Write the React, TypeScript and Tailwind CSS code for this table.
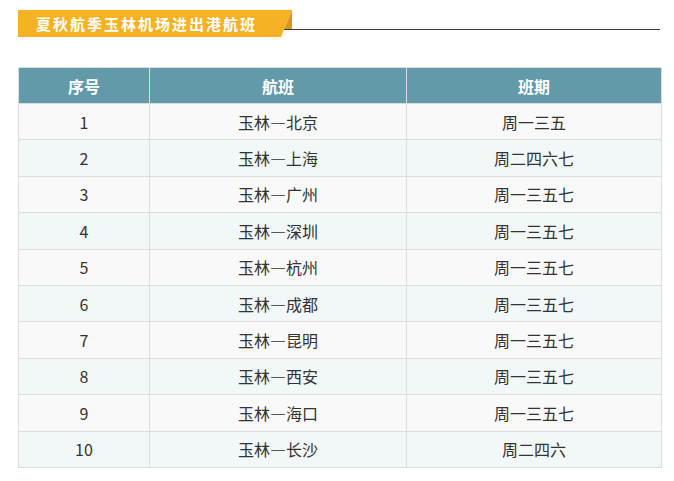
import React from "react";

const rows: [string, string, string, string][] = [
  ["1", "玉林", "北京", "周一三五"],
  ["2", "玉林", "上海", "周二四六七"],
  ["3", "玉林", "广州", "周一三五七"],
  ["4", "玉林", "深圳", "周一三五七"],
  ["5", "玉林", "杭州", "周一三五七"],
  ["6", "玉林", "成都", "周一三五七"],
  ["7", "玉林", "昆明", "周一三五七"],
  ["8", "玉林", "西安", "周一三五七"],
  ["9", "玉林", "海口", "周一三五七"],
  ["10", "玉林", "长沙", "周二四六"],
];

export default function App() {
  return (
    <div
      className="w-[674px] h-[481px] bg-white"
      style={{ fontFamily: '"Microsoft YaHei", "Noto Sans CJK SC", "Noto Sans", sans-serif' }}
    >
      <div className="flex items-start pt-[10px] pl-[18px] pr-[14px]">
        <div className="relative w-[274px] h-[27px] shrink-0">
          <svg className="absolute inset-0" width="274" height="27" viewBox="0 0 274 27">
            <polygon points="0,0 274,0 263,27 0,27" fill="#f7b125" />
            <polygon points="274,0 274,19 266.3,19" fill="#d9961c" />
          </svg>
          <div className="relative pl-[18px] leading-[27px] text-[15px] font-bold text-white tracking-[2px]">
            夏秋航季玉林机场进出港航班
          </div>
        </div>
        <div className="flex-1 h-[20px] border-b border-[#3a3a3a] -ml-[8px]" />
      </div>

      <div className="pl-[18px] pt-[30px]">
        <table className="w-[643px] table-fixed border-collapse text-[16px] text-[#333]">
          <colgroup>
            <col className="w-[131px]" />
            <col className="w-[257px]" />
            <col className="w-[255px]" />
          </colgroup>
          <thead>
            <tr className="h-[36px] bg-[#639aaa] text-white font-bold">
              <th className="border border-[#dddddd] font-bold">序号</th>
              <th className="border border-[#dddddd] font-bold">航班</th>
              <th className="border border-[#dddddd] font-bold">班期</th>
            </tr>
          </thead>
          <tbody>
            {rows.map((r, i) => (
              <tr key={r[0]} className={`h-[36.4px] ${i % 2 === 0 ? "bg-[#f9f9f9]" : "bg-[#f2f7f7]"}`}>
                <td className="border border-[#dddddd] text-center p-0">{r[0]}</td>
                <td className="border border-[#dddddd] text-center p-0">
                  {r[1]}
                  <span className="[font-feature-settings:'fwid']">—</span>
                  {r[2]}
                </td>
                <td className="border border-[#dddddd] text-center p-0">{r[3]}</td>
              </tr>
            ))}
          </tbody>
        </table>
      </div>
    </div>
  );
}
